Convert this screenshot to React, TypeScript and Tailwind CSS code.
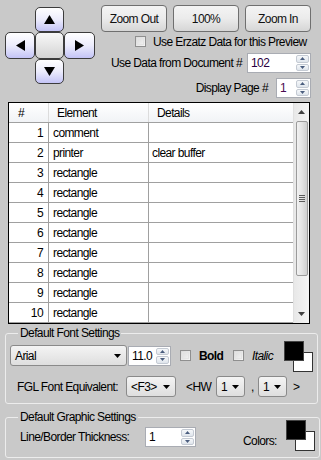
import React from 'react';

const rows = [
  { n: 1, el: 'comment', det: '' },
  { n: 2, el: 'printer', det: 'clear buffer' },
  { n: 3, el: 'rectangle', det: '' },
  { n: 4, el: 'rectangle', det: '' },
  { n: 5, el: 'rectangle', det: '' },
  { n: 6, el: 'rectangle', det: '' },
  { n: 7, el: 'rectangle', det: '' },
  { n: 8, el: 'rectangle', det: '' },
  { n: 9, el: 'rectangle', det: '' },
  { n: 10, el: 'rectangle', det: '' },
];

const Tri = ({ dir }: { dir: 'up' | 'down' | 'left' | 'right' }) => {
  const d = {
    up: 'M0 9 L5.5 0 L11 9Z',
    down: 'M0 0 L11 0 L5.5 9Z',
    left: 'M9 0 L9 11 L0 5.5Z',
    right: 'M0 0 L9 5.5 L0 11Z',
  }[dir];
  const v = dir === 'up' || dir === 'down';
  return (
    <svg width={v ? 11 : 9} height={v ? 9 : 11} viewBox={v ? '0 0 11 9' : '0 0 9 11'}>
      <path d={d} fill="#000" />
    </svg>
  );
};

const PadButton = ({ children }: { children?: React.ReactNode }) => (
  <div className="w-full h-full rounded-[5px] border border-[#3c3c3c] bg-gradient-to-b from-[#ffffff] via-[#ececfc] to-[#c4c4f6] flex items-center justify-center">
    {children}
  </div>
);

const WinButton = ({ label }: { label: string }) => (
  <div className="w-[66px] h-[27px] rounded-[4px] border border-[#6f6f6f] bg-gradient-to-b from-[#f4f4f4] via-[#ebebeb] to-[#d6d6d6] flex items-center justify-center text-[#111]">
    {label}
  </div>
);

const Check = () => (
  <div className="shrink-0 w-[11px] h-[11px] border border-[#8f8f8f] bg-gradient-to-br from-[#d9d9d9] to-[#f6f6f6] p-[1px]">
    <div className="w-full h-full border border-[#e4e4e4]" />
  </div>
);

const Spin = () => (
  <div className="flex flex-col gap-[1px] w-[13px] h-full py-[1px]">
    <div className="flex-1 rounded-[2px] border border-[#c4cad3] bg-gradient-to-b from-[#f6f8fa] to-[#dfe5ec] flex items-center justify-center">
      <svg width="5" height="3" viewBox="0 0 5 3"><path d="M0 3 L2.5 0 L5 3Z" fill="#4a5d7e" /></svg>
    </div>
    <div className="flex-1 rounded-[2px] border border-[#c4cad3] bg-gradient-to-b from-[#f6f8fa] to-[#dfe5ec] flex items-center justify-center">
      <svg width="5" height="3" viewBox="0 0 5 3"><path d="M0 0 L5 0 L2.5 3Z" fill="#4a5d7e" /></svg>
    </div>
  </div>
);

const SpinInput = ({ value, w, color = 'text-black' }: { value: string; w: string; color?: string }) => (
  <div className={`${w} shrink-0 h-[20px] bg-white border border-[#a9acb3] flex items-stretch pr-[1px]`}>
    <div className={`flex-1 pl-[3px] flex items-center ${color}`}>{value}</div>
    <Spin />
  </div>
);

const Combo = ({ value, w }: { value: string; w: string }) => (
  <div className={`${w} shrink-0 h-[21px] rounded-[3px] border border-[#8a8a8a] bg-gradient-to-b from-[#f4f4f4] to-[#dedede] flex items-center justify-between pl-[4px] pr-[5px]`}>
    <span>{value}</span>
    <svg width="7" height="4" viewBox="0 0 7 4"><path d="M0 0 L7 0 L3.5 4Z" fill="#000" /></svg>
  </div>
);

// black foreground colour over white background colour
const Swatch = ({ top, cls }: { top: string; cls: string }) => (
  <div className={`relative shrink-0 w-[29px] ${cls}`}>
    <div className={`absolute left-0 ${top} w-[29px] h-[31px]`}>
      <div className="absolute left-[9px] top-[11px] w-[20px] h-[20px] bg-white border border-[#333]" />
      <div className="absolute left-0 top-0 w-[20px] h-[20px] bg-black border border-[#444]" />
    </div>
  </div>
);

export default function App() {
  return (
    <div className="w-[321px] h-[460px] bg-[#c9c9c9] overflow-hidden whitespace-nowrap font-['Liberation_Sans',Arial,sans-serif] text-[12px] tracking-[-0.6px] text-black leading-none">
      {/* top controls */}
      <div className="flex h-[102px] pt-[5px]">
        <div className="ml-[5px] mt-[2px] grid grid-cols-[30px_29px_31px] grid-rows-[25px_27px_25px] w-[90px] h-[77px]">
          <div />
          <PadButton><Tri dir="up" /></PadButton>
          <div />
          <PadButton><Tri dir="left" /></PadButton>
          <div className="w-full h-full rounded-[5px] border border-[#3c3c3c] bg-gradient-to-b from-[#f8f8f8] to-[#d4d4d4]" />
          <PadButton><Tri dir="right" /></PadButton>
          <div />
          <PadButton><Tri dir="down" /></PadButton>
          <div />
        </div>

        <div className="ml-[6px] w-[210px] flex flex-col">
          <div className="flex gap-[6px]">
            <WinButton label="Zoom Out" />
            <WinButton label="100%" />
            <WinButton label="Zoom In" />
          </div>
          <div className="mt-[4px] pl-[34px] flex items-center gap-[7px] h-[11px]">
            <Check />
            <span>Use Erzatz Data for this Preview</span>
          </div>
          <div className="mt-[6px] flex justify-end items-center gap-[5px]">
            <span>Use Data from Document #</span>
            <SpinInput value="102" w="w-[64px]" color="text-[#2a0040]" />
          </div>
          <div className="mt-[5px] flex justify-end items-center gap-[8px]">
            <span>Display Page #</span>
            <SpinInput value="1" w="w-[35px]" color="text-[#4a0a50]" />
          </div>
        </div>
      </div>

      {/* element grid */}
      <div className="ml-[8px] w-[302px] h-[222px] border border-black bg-white flex">
        <div className="w-[284px] flex flex-col">
          <div className="h-[20px] flex border-b border-[#a0a0a0] bg-gradient-to-b from-white to-[#f1f3f6]">
            <div className="w-[40px] pl-[9px] flex items-center border-r border-[#dcdcdc]">#</div>
            <div className="w-[100px] pl-[8px] flex items-center border-r border-[#dcdcdc]">Element</div>
            <div className="flex-1 pl-[8px] flex items-center">Details</div>
          </div>
          {rows.map((r) => (
            <div key={r.n} className="h-[20px] flex border-b border-[#a0a0a0]">
              <div className="w-[40px] pr-[5px] flex items-center justify-end border-r border-[#a0a0a0]">{r.n}</div>
              <div className="w-[100px] pl-[4px] flex items-center border-r border-[#a0a0a0]">{r.el}</div>
              <div className="flex-1 pl-[3px] flex items-center">{r.det}</div>
            </div>
          ))}
        </div>
        <div className="w-[16px] bg-gradient-to-r from-[#e8e8e8] to-[#f4f4f4] flex flex-col items-center border-l border-[#e0e0e0]">
          <div className="h-[18px] flex items-center justify-center">
            <svg width="7" height="4" viewBox="0 0 7 4"><path d="M0 4 L3.5 0 L7 4Z" fill="#404040" /></svg>
          </div>
          <div className="w-[12px] h-[155px] rounded-[2px] border border-[#9b9b9b] bg-gradient-to-r from-[#f2f2f2] via-[#e3e3e3] to-[#cfcfcf] flex items-center justify-center">
            <div className="flex flex-col gap-[1px]">
              <div className="w-[6px] h-[1px] bg-[#5a5a5a]" />
              <div className="w-[6px] h-[1px] bg-[#5a5a5a]" />
              <div className="w-[6px] h-[1px] bg-[#5a5a5a]" />
              <div className="w-[6px] h-[1px] bg-[#5a5a5a]" />
            </div>
          </div>
          <div className="flex-1" />
          <div className="h-[18px] flex items-center justify-center">
            <svg width="7" height="4" viewBox="0 0 7 4"><path d="M0 0 L7 0 L3.5 4Z" fill="#404040" /></svg>
          </div>
        </div>
      </div>

      {/* font settings */}
      <fieldset className="ml-[5px] mt-[3px] w-[312px] h-[77px] rounded-[3px] border border-[#ececec] px-[4px]">
        <legend className="ml-[8px] px-[2px]">Default Font Settings</legend>
        <div className="mt-[6px] h-[21px] flex items-center">
          <Combo value="Arial" w="w-[117px]" />
          <div className="ml-[1px]"><SpinInput value="11.0" w="w-[43px]" /></div>
          <div className="ml-[9px]"><Check /></div>
          <span className="ml-[8px] w-[25px] shrink-0 font-bold">Bold</span>
          <div className="ml-[9px]"><Check /></div>
          <span className="ml-[8px] w-[22px] shrink-0 italic">Italic</span>
          <Swatch top="-top-[4px]" cls="ml-[10px] h-[21px] self-start" />
        </div>
        <div className="mt-[10px] h-[21px] flex items-center">
          <span className="ml-[7px] w-[101px] shrink-0">FGL Font Equivalent:</span>
          <div className="ml-[8px]"><Combo value="<F3>" w="w-[50px]" /></div>
          <span className="ml-[10px] w-[22px] shrink-0">&lt;HW</span>
          <div className="ml-[8px]"><Combo value="1" w="w-[29px]" /></div>
          <span className="ml-[6px] w-[3px] shrink-0">,</span>
          <div className="ml-[4px]"><Combo value="1" w="w-[29px]" /></div>
          <span className="ml-[6px]">&gt;</span>
        </div>
      </fieldset>

      {/* graphic settings */}
      <fieldset className="ml-[5px] mt-[7px] w-[312px] h-[47px] rounded-[3px] border border-[#ececec] px-[4px]">
        <legend className="ml-[8px] px-[2px]">Default Graphic Settings</legend>
        <div className="mt-[4px] h-[20px] flex items-center">
          <span className="ml-[10px] w-[123px] shrink-0">Line/Border Thickness:</span>
          <div className="ml-[2px]"><SpinInput value="1" w="w-[51px]" /></div>
          <span className="ml-[47px] w-[33px] shrink-0 pt-[7px]">Colors:</span>
          <Swatch top="-top-[7px]" cls="ml-[10px] h-[20px] self-start" />
        </div>
      </fieldset>
    </div>
  );
}
